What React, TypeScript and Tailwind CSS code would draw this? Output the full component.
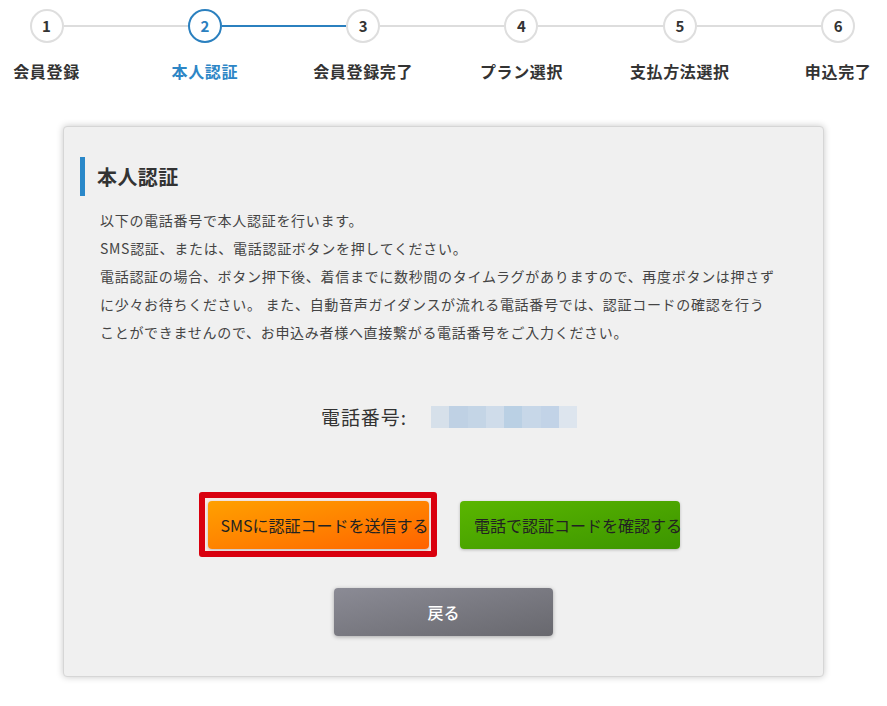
const steps = ["会員登録", "本人認証", "会員登録完了", "プラン選択", "支払方法選択", "申込完了"];
const current = 1;

const blurBlocks = ["#d6e0ea", "#bfd1e4", "#c4d5e6", "#cfdcea", "#bad0e4", "#c7d7e8", "#c2d3e7", "#dde5ee"];

const lines = [
  "以下の電話番号で本人認証を行います。",
  "SMS認証、または、電話認証ボタンを押してください。",
  "電話認証の場合、ボタン押下後、着信までに数秒間のタイムラグがありますので、再度ボタンは押さず",
  "に少々お待ちください。 また、自動音声ガイダンスが流れる電話番号では、認証コードの確認を行う",
  "ことができませんので、お申込み者様へ直接繋がる電話番号をご入力ください。",
];

function Stepper() {
  return (
    <div className="pt-[9px]">
      <div className="flex items-center ml-[29.5px]">
        {steps.map((_, i) => (
          <div key={i} className="flex items-center">
            <div
              className={`w-[34px] h-[34px] rounded-full border-2 bg-white flex items-center justify-center text-[15px] font-bold ${
                i === current ? "border-[#2b80bf] text-[#2b80bf]" : "border-[#dedede] text-[#333]"
              }`}
            >
              {i + 1}
            </div>
            {i < steps.length - 1 && (
              <div className={`w-[124.33px] h-[2px] ${i === current ? "bg-[#2b80bf]" : "bg-[#dddddd]"}`} />
            )}
          </div>
        ))}
      </div>
      <div className="flex ml-[-32.67px] mt-[16px]">
        {steps.map((label, i) => (
          <div
            key={label}
            className={`w-[158.33px] shrink-0 text-center text-[16px] leading-[24px] font-bold tracking-[0.04em] ${
              i === current ? "text-[#2d86c6]" : "text-[#333]"
            }`}
          >
            {label}
          </div>
        ))}
      </div>
    </div>
  );
}

export default function App() {
  return (
    <div
      className="min-h-[706px] bg-white overflow-hidden"
      style={{ fontFamily: '"Noto Sans CJK JP", "Noto Sans", sans-serif' }}
    >
      <Stepper />

      <div className="w-[761px] mx-auto mt-[43px] bg-[#f0f0f0] border border-[#d6d6d6] rounded-[4px] shadow-[0_0_7px_rgba(0,0,0,0.22)] pt-[30px] pb-[40px]">
        <div className="flex items-center h-[39px] ml-[16px] border-l-[5px] border-[#2a88c9] pl-[12px]">
          <h2 className="text-[20px] font-bold text-[#333] tracking-[0.02em]">本人認証</h2>
        </div>

        <div className="mt-[10px] ml-[36px] w-[700px] text-[14px] leading-[28px] tracking-[0.05em] text-[#444]">
          {lines.map((l) => (
            <p key={l} className="whitespace-nowrap">
              {l}
            </p>
          ))}
        </div>

        <div className="mt-[56px] h-[30px] flex items-center justify-center gap-[24px] pl-[11px]">
          <span className="text-[19px] tracking-[0.05em] text-[#333]">電話番号:</span>
          <div className="flex h-[22px] w-[146px]">
            {blurBlocks.map((c, i) => (
              <div key={i} className="flex-1" style={{ backgroundColor: c }} />
            ))}
          </div>
        </div>

        <div className="mt-[60px] flex items-center justify-center gap-[23px] pr-[8px]">
          <div className="border-[6px] border-[#d9000e] rounded-[3px] p-[2.5px] bg-[#f6e9e4]">
            <button className="w-[221px] h-[48px] rounded-[4px] bg-gradient-to-br from-[#ffa000] to-[#ff6200] text-[16px] text-[#222] text-left pl-[13px] whitespace-nowrap shadow-[0_1px_3px_rgba(0,0,0,0.2)]">
              SMSに認証コードを送信する
            </button>
          </div>
          <button className="w-[220px] h-[48px] rounded-[4px] bg-gradient-to-br from-[#5ab600] to-[#3c9500] text-[16px] text-[#222] text-left pl-[14px] whitespace-nowrap shadow-[0_1px_3px_rgba(0,0,0,0.25)]">
            電話で認証コードを確認する
          </button>
        </div>

        <div className="mt-[31px] flex justify-center">
          <button className="w-[219px] h-[48px] rounded-[4px] bg-gradient-to-br from-[#8b8b95] to-[#68686e] text-white text-[16px] font-medium shadow-[0_1px_4px_rgba(0,0,0,0.3)]">
            戻る
          </button>
        </div>
      </div>
    </div>
  );
}
